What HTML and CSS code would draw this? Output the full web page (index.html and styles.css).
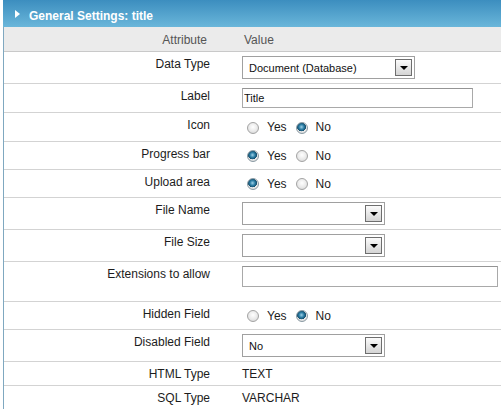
FILE: index.html
```html
<!DOCTYPE html>
<html>
<head>
<meta charset="utf-8">
<link rel="stylesheet" href="styles.css">
</head>
<body>
<div class="panel">
  <div class="panel-head"><span class="caret"></span><span>General Settings: title</span></div>
  <div class="rows">
    <div class="row row-head"><div class="attr">Attribute</div><div class="val">Value</div></div>

    <div class="row h32">
      <div class="attr">Data Type</div>
      <div class="val">
        <div class="select w-wide"><select><option>Document (Database)</option></select><span class="btn"></span></div>
      </div>
    </div>

    <div class="row h29">
      <div class="attr">Label</div>
      <div class="val"><input class="text w-label" type="text" value="Title"></div>
    </div>

    <div class="row h29">
      <div class="attr">Icon</div>
      <div class="val radios">
        <label class="opt"><input type="radio" name="icon">Yes</label>
        <label class="opt"><input type="radio" name="icon" checked>No</label>
      </div>
    </div>

    <div class="row h28">
      <div class="attr">Progress bar</div>
      <div class="val radios">
        <label class="opt"><input type="radio" name="pb" checked>Yes</label>
        <label class="opt"><input type="radio" name="pb">No</label>
      </div>
    </div>

    <div class="row h28">
      <div class="attr">Upload area</div>
      <div class="val radios">
        <label class="opt"><input type="radio" name="ua" checked>Yes</label>
        <label class="opt"><input type="radio" name="ua">No</label>
      </div>
    </div>

    <div class="row h32">
      <div class="attr">File Name</div>
      <div class="val">
        <div class="select w-narrow"><select><option></option></select><span class="btn"></span></div>
      </div>
    </div>

    <div class="row h32">
      <div class="attr">File Size</div>
      <div class="val">
        <div class="select w-narrow"><select><option></option></select><span class="btn"></span></div>
      </div>
    </div>

    <div class="row h40">
      <div class="attr">Extensions to allow</div>
      <div class="val val-top"><input class="text w-ext" type="text" value=""></div>
    </div>

    <div class="row h28">
      <div class="attr">Hidden Field</div>
      <div class="val radios">
        <label class="opt"><input type="radio" name="hf">Yes</label>
        <label class="opt"><input type="radio" name="hf" checked>No</label>
      </div>
    </div>

    <div class="row h32">
      <div class="attr">Disabled Field</div>
      <div class="val">
        <div class="select w-narrow"><select><option>No</option></select><span class="btn"></span></div>
      </div>
    </div>

    <div class="row h24">
      <div class="attr">HTML Type</div>
      <div class="val plain">TEXT</div>
    </div>

    <div class="row h24">
      <div class="attr">SQL Type</div>
      <div class="val plain">VARCHAR</div>
    </div>
  </div>
</div>
</body>
</html>
```

FILE: styles.css
```css
* { box-sizing: border-box; }

body {
  margin: 0;
  font-family: "Liberation Sans", Arial, sans-serif;
  font-size: 12px;
  color: #1c1c1c;
  background: #fff;
}

.panel {
  margin-left: 3px;
}

.panel-head {
  height: 27px;
  padding: 9px 0 0 12px;
  line-height: 14px;
  display: flex;
  align-items: flex-start;
  gap: 9px;
  color: #fff;
  font-weight: bold;
  font-size: 12px;
  background: linear-gradient(#3c8ebf, #6ab6da);
}

.caret {
  width: 0;
  height: 0;
  margin-top: 1px;
  border-top: 4px solid transparent;
  border-bottom: 4px solid transparent;
  border-left: 5px solid #fff;
}

.rows {
  border-left: 1px solid #7fa8c0;
  min-height: 382px;
}

.row {
  display: grid;
  grid-template-columns: 228px 1fr;
  border-bottom: 1px solid #d3d3d3;
  line-height: 15px;
}

.row-head {
  height: 25px;
  background: #ebebeb;
  color: #555;
  border-bottom: 1px solid #c9c9c9;
}
.row-head .attr { padding: 6px 25px 0 0; }
.row-head .val { padding: 6px 0 0 12px; align-self: start; }

.h24 { height: 24px; }
.h28 { height: 28px; }
.h29 { height: 29px; }
.h32 { height: 32px; }
.h40 { height: 40px; }

.attr {
  text-align: right;
  padding: 5px 22px 0 0;
  align-self: start;
}

.val {
  padding-left: 10px;
  align-self: center;
  display: flex;
  align-items: center;
}

.val-top {
  align-self: start;
  padding-top: 4px;
}

.plain { padding-top: 1px; }

/* radios */
.radios { padding-left: 15px; padding-top: 1px; }

.opt {
  display: flex;
  align-items: center;
  margin-right: 9px;
}

.opt input {
  appearance: none;
  -webkit-appearance: none;
  width: 12px;
  height: 12px;
  margin: 0 8px 0 0;
  border-radius: 50%;
  border: 1px solid #a3a3a3;
  background: radial-gradient(circle at 50% 40%, #ffffff 0, #e9e9e9 55%, #cfcfcf 100%);
}

.opt input:checked {
  border-color: #8a9aa3;
  background:
    radial-gradient(circle at 45% 40%, #9fd0e6 0, #2d7fa6 30%, #144d6c 52%, transparent 56%),
    radial-gradient(circle at 50% 40%, #ffffff 0, #e8e8e8 60%, #cdcdcd 100%);
}

/* text inputs */
.text {
  height: 20px;
  border: 1px solid #a9a9a9;
  border-top-color: #949494;
  padding: 0 0 0 1px;
  font-family: "Liberation Sans", Arial, sans-serif;
  font-size: 11px;
  color: #111;
  background: #fff;
}
.w-label { width: 231px; }
.w-ext { width: 256px; height: 21px; }

/* selects */
.select {
  position: relative;
  height: 23px;
  border: 1px solid #a0a0a0;
  background: #fff;
}
.w-wide { width: 173px; }
.w-narrow { width: 143px; }

.select select {
  appearance: none;
  -webkit-appearance: none;
  width: 100%;
  height: 100%;
  border: 0;
  padding: 0 0 0 6px;
  margin: 0;
  background: transparent;
  font-family: "Liberation Sans", Arial, sans-serif;
  font-size: 11px;
  color: #111;
}

.btn {
  position: absolute;
  right: 2px;
  top: 2px;
  width: 17px;
  height: 17px;
  border: 1px solid #6e6e6e;
  background: linear-gradient(#fbfbfb, #d4d4d4);
  display: flex;
  align-items: center;
  justify-content: center;
}
.btn::after {
  content: "";
  width: 0;
  height: 0;
  margin-top: 1px;
  border-left: 4px solid transparent;
  border-right: 4px solid transparent;
  border-top: 4px solid #000;
}
```
